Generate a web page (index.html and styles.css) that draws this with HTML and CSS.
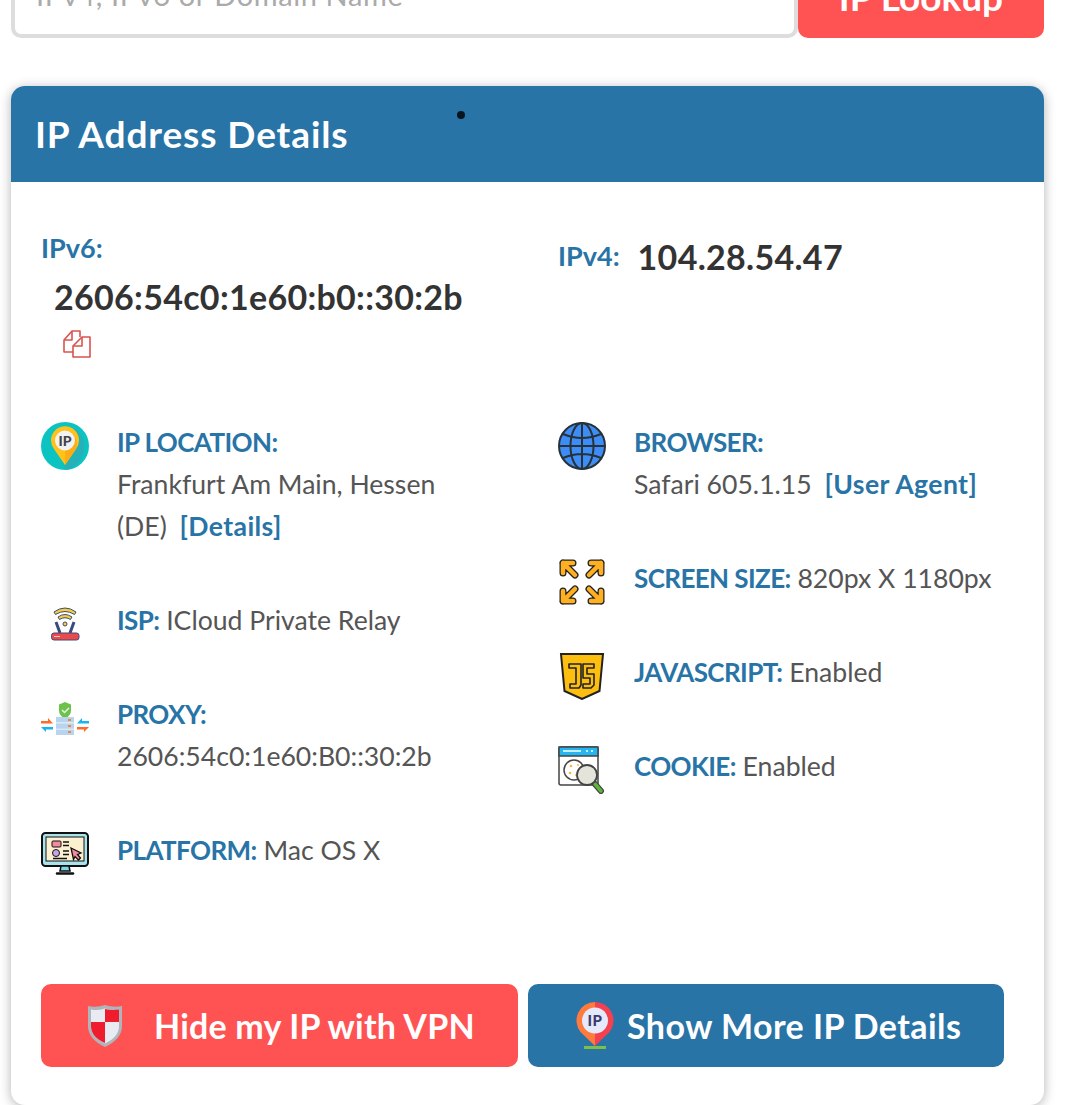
FILE: index.html
```html
<!DOCTYPE html>
<html lang="en">
<head>
<meta charset="utf-8">
<title>IP Address Details</title>
<link rel="stylesheet" href="styles.css">
</head>
<body>
<div class="page">
  <form class="search">
    <div class="search-input">IPv4, IPv6 or Domain Name</div>
    <div class="search-btn">IP Lookup</div>
  </form>
  <section class="card">
    <span class="dot"></span>
    <h2 class="card-head">IP Address Details</h2>
    <div class="card-body">
      <div class="ips">
        <div class="ip6">
          <div class="label">IPv6:</div>
          <div class="ip-value ip6-value">2606:54c0:1e60:b0::30:2b</div>
          <svg class="copy" viewBox="0 0 28 28" fill="none" stroke="#d9534f" stroke-width="1.6" stroke-linejoin="round"><path d="M10 22H1V10l8-9h8v6"/><path d="M1 10h8V1"/><path d="M19 7h8v20H10V16z"/><path d="M10 16h9V7"/></svg>
        </div>
        <div class="ip4">
          <span class="label">IPv4:</span>
          <span class="ip-value">104.28.54.47</span>
        </div>
      </div>
      <div class="details">
        <div class="col">
          <div class="item">
            <svg class="icon" viewBox="0 0 48 48"><circle cx="24" cy="24" r="24" fill="#0bc4c1"/><path d="M34 6a24 24 0 0 1-8 41.900L22 44z" fill="#26b0b8"/><path d="M24 43 13 27a14 14 0 1 1 22 0z" fill="#ffc21a"/><path d="M24 43V8a14 14 0 0 1 11 19z" fill="#fdad13"/><circle cx="24" cy="18.500" r="10" fill="#f3f2f2"/><text x="24" y="23.500" class="ip-mark">IP</text></svg>
            <div class="text"><strong>IP LOCATION:</strong><br>Frankfurt Am Main, Hessen<br>(DE) <a class="link">[Details]</a></div>
          </div>
          <div class="item">
            <svg class="icon" viewBox="0 0 48 48"><g fill="none" stroke="#3a4a7d"><path d="M13 12q11-8 22 0l-1.500 2.500q-9.500-6-19 0z" fill="#f4d03f"/><path d="M17 17q7-5 14 0l-1.500 2.500q-5.500-3.500-11 0z" fill="#f4d03f"/><path d="m15 22 4 11M33 22l-4 11" stroke-width="3"/><circle cx="24" cy="24" r="2" fill="#f4d03f"/></g><rect x="10.500" y="33" width="27.500" height="7" rx="2.500" fill="#ea4a4a" stroke="#3a4a7d"/><path d="M13 36.500h6" stroke="#f9c0c0"/></svg>
            <div class="text"><strong>ISP:</strong> ICloud Private Relay</div>
          </div>
          <div class="item">
            <svg class="icon" viewBox="0 0 48 48"><path d="M24 8l6 2.500v6q0 5-6 8-6-3-6-8v-6z" fill="#6cc24a"/><path d="m21 16 2.500 2.500L28 14" fill="none" stroke="#e8f5e0" stroke-width="1.500"/><g fill="#b8d4ef"><rect x="15" y="23" width="18" height="5.500"/><rect x="15" y="29.300" width="18" height="5.500"/><rect x="15" y="35.500" width="18" height="5.500"/></g><g fill="#ee8a3c"><rect x="27" y="25" width="3" height="2"/><rect x="27" y="31" width="3" height="2"/><rect x="27" y="37" width="3" height="2"/></g><path d="M0 27h7v-3l5 5.500H0z" fill="#ff6b2c"/><path d="M12 33v2.500H5V38l-5-5z" fill="#18b4f2"/><path d="M48 27h-7v-3l-5 5.500h12z" fill="#18b4f2"/><path d="M36 33v2.500h7V38l5-5z" fill="#ff6b2c"/></svg>
            <div class="text"><strong>PROXY:</strong><br>2606:54c0:1e60:B0::30:2b</div>
          </div>
          <div class="item">
            <svg class="icon" viewBox="0 0 48 48"><rect x="1" y="3" width="46" height="33" rx="3.500" fill="#a8e3ee" stroke="#111" stroke-width="2"/><rect x="5" y="7" width="38" height="24" fill="#fbf0d0" stroke="#111"/><rect x="11" y="11" width="9" height="6" rx="1" fill="#f48aa0" stroke="#111"/><circle cx="15" cy="23" r="3.500" fill="#c9a3e8" stroke="#111"/><path d="M22 12h6M22 15.500h6M22 21h6M22 24.500h6M12 28.500h14" stroke="#111" stroke-width="1.300"/><path d="m30 18 10 5-3.500 1.500 3 3.500-2 2-3.500-3.500-1.500 3z" fill="#f48aa0" stroke="#111" stroke-width="1.300"/><path d="M20 36h8l1 5H19z" fill="#7fd8ea" stroke="#111" stroke-width="1.500"/><path d="M16 43.500h16" stroke="#111" stroke-width="2.500" stroke-linecap="round"/></svg>
            <div class="text"><strong>PLATFORM:</strong> Mac OS X</div>
          </div>
        </div>
        <div class="col">
          <div class="item">
            <svg class="icon" viewBox="0 0 48 48"><g fill="#3e8cf5" stroke="#263238" stroke-width="2"><circle cx="24" cy="24" r="23"/><ellipse cx="24" cy="24" rx="11.500" ry="23"/></g><path d="M24 1v46M1 24h46M5 12q19 8 38 0M5 36q19-8 38 0" fill="none" stroke="#263238" stroke-width="2"/></svg>
            <div class="text"><strong>BROWSER:</strong><br>Safari 605.1.15 <a class="link">[User Agent]</a></div>
          </div>
          <div class="item">
            <svg class="icon" viewBox="0 0 48 48"><g fill="none" stroke-linejoin="round" stroke-linecap="round"><path class="arrow-edge" d="M5 15V5h10M5 5l12 12M43 15V5H33M43 5 31 17M5 33v10h10M5 43l12-12M43 33v10H33M43 43 31 31"/><path class="arrow-fill" d="M5 15V5h10M5 5l12 12M43 15V5H33M43 5 31 17M5 33v10h10M5 43l12-12M43 33v10H33M43 43 31 31"/></g></svg>
            <div class="text"><strong>SCREEN SIZE:</strong> 820px X 1180px</div>
          </div>
          <div class="item">
            <svg class="icon" viewBox="0 0 48 48"><path d="M3 2h42l-3.500 37L24 47 6.500 39z" fill="#fdbf0f" stroke="#222" stroke-width="2"/><path d="M11 12h12v21l-2 3h-9v-4h6V16h-7zM25 12h11v4h-7v6h7v11l-3 3h-8v-4h7v-6h-7z" fill="none" stroke="#222" stroke-width="1.600" stroke-linejoin="round"/></svg>
            <div class="text"><strong>JAVASCRIPT:</strong> Enabled</div>
          </div>
          <div class="item">
            <svg class="icon" viewBox="0 0 48 48"><rect x="1" y="1" width="39" height="38" rx="2" fill="#fff" stroke="#444" stroke-width="1.500"/><rect x="1" y="1" width="39" height="9" fill="#23b6f0" stroke="#444" stroke-width="1.500"/><path d="M5 5h18M28 5h2M33 5h2" stroke="#fff" stroke-width="1.500"/><circle cx="16" cy="24" r="10" fill="#fff" stroke="#444" stroke-width="1.500"/><g fill="#f6b73c"><circle cx="13" cy="20" r="1.300"/><circle cx="20" cy="19" r="1"/><circle cx="12" cy="27" r="1.300"/><circle cx="18" cy="29" r="1"/></g><path d="m36 37 7 8" stroke="#444" stroke-width="6" stroke-linecap="round"/><path d="m37 38 6 7" stroke="#5db53c" stroke-width="3.500" stroke-linecap="round"/><circle cx="29" cy="29" r="10" fill="#e4e4da" stroke="#444" stroke-width="1.800"/></svg>
            <div class="text"><strong>COOKIE:</strong> Enabled</div>
          </div>
        </div>
      </div>
      <div class="actions">
        <a class="btn btn-red">
          <svg class="shield" viewBox="0 0 36 44"><path d="M18 1q9 3 17 1v20q0 13-17 21Q1 35 1 22V2q8 2 17-1z" fill="#b0b4bb"/><path d="M18 4.500q8 2.500 14 1V22q0 11-14 17.500Q4 33 4 22V5.500q6 1.500 14-1z" fill="#e8ebf2"/><path d="M18 5v13h14V5.500q-7 1-14-.5zM4 18h14v21Q4 33 4 22z" fill="#ee1c2c"/></svg>
          <span>Hide my IP with VPN</span>
        </a>
        <a class="btn btn-blue">
          <svg class="pin" viewBox="0 0 38 48"><path d="M19 44 4.500 30A18.500 18.500 0 0 1 19 0z" fill="#ff7a3c"/><path d="M19 44V0a18.500 18.500 0 0 1 14.500 30z" fill="#f5414f"/><circle cx="19" cy="18.500" r="13" fill="#e4e9fb"/><text x="19" y="24" class="ip-mark ip-mark-blue">IP</text><rect x="8" y="44" width="22" height="3" fill="#7cc04a"/></svg>
          <span>Show More IP Details</span>
        </a>
      </div>
    </div>
  </section>
</div>
</body>
</html>
```
FILE: styles.css
```css
* { box-sizing: border-box; }
html, body { margin: 0; padding: 0; background: #fff; height: 100%; overflow: hidden; }
body { font-family: "Lato", "Open Sans", sans-serif; color: #555; }
.page { padding: 0 33px 0 11px; margin-top: -22px; }
.search { display: flex; height: 60px; margin: 0 0 48px; }
.search-input { width: 787px; border: 4px solid #ddd; border-radius: 10px; background: #fff; font-size: 29px; letter-spacing: .6px; line-height: 26px; color: #aaa; padding: 0 21px; }
.search-btn { width: 246px; background: #ff5252; color: #fff; border-radius: 0 10px 10px 10px; font-size: 37px; font-weight: 700; text-align: center; line-height: 38px; }
.card { position: relative; border-radius: 14px; background: #fff; box-shadow: 0 2px 12px rgba(0, 0, 0, .3); }
.dot { position: absolute; left: 446px; top: 25px; width: 8px; height: 8px; border-radius: 50%; background: #0a1420; }
.card-head { margin: 0; height: 96px; padding-left: 24px; background: #2874a6; border-radius: 14px 14px 0 0; color: #fff; font-size: 37px; letter-spacing: .9px; font-weight: 700; line-height: 96px; }
.card-body { padding: 45px 40px 38px 30px; }
.ips { display: grid; grid-template-columns: 517px 1fr; height: 194px; }
.label { font-size: 27px; font-weight: 700; color: #2874a6; line-height: 42px; }
.ip-value { font-size: 34px; letter-spacing: .3px; font-weight: 700; color: #333; }
.ip6-value { margin: 7px 0 0 13px; line-height: 42px; }
.copy { display: block; width: 28px; height: 28px; margin: 12px 0 0 22px; }
.ip4 { display: flex; align-items: center; gap: 18px; height: 58px; }
.details { display: grid; grid-template-columns: 517px 1fr; }
.col { display: flex; flex-direction: column; gap: 52px; }
.item { display: flex; gap: 28px; }
.icon { flex: none; width: 48px; height: 48px; margin: 1px 0 -7px; }
.text { font-size: 26.6px; line-height: 42px; color: #555; white-space: nowrap; }
.text strong { color: #2874a6; font-weight: 700; font-size: 26px; letter-spacing: -.6px; }
.link { color: #2874a6; font-weight: 700; letter-spacing: .4px; margin-left: 6px; }
.ip-mark { font-family: "Lato", sans-serif; font-size: 14px; font-weight: 900; fill: #444; text-anchor: middle; }
.ip-mark-blue { font-size: 15px; fill: #3d3a6e; }
.arrow-edge { stroke: #222; stroke-width: 7; }
.arrow-fill { stroke: #ffb020; stroke-width: 4.500; }
.actions { display: flex; gap: 10px; margin-top: 113px; }
.btn { display: flex; align-items: center; height: 83px; border-radius: 10px; color: #fff; font-size: 34px; font-weight: 700; }
.btn-red { width: 477px; background: #ff5252; padding-left: 46px; gap: 31px; letter-spacing: .2px; }
.btn-blue { width: 476px; background: #2874a6; padding-left: 48px; gap: 13px; letter-spacing: .45px; }
.shield { width: 36px; height: 44px; flex: none; }
.pin { width: 38px; height: 48px; flex: none; }
```
